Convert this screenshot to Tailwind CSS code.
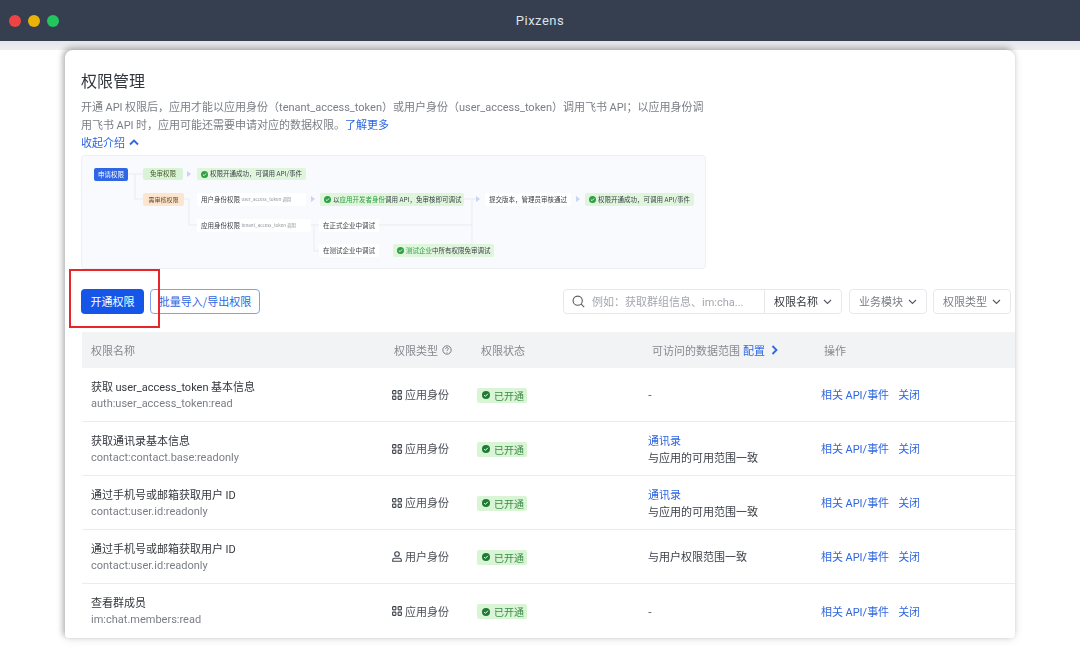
<!DOCTYPE html>
<html lang="zh-CN">
<head>
    <meta charset="UTF-8">
    <title>Pixzens</title>
    <script src="https://cdn.jsdelivr.net/npm/@tailwindcss/browser@4"></script>
</head>
<body class="relative w-[1080px] h-[648px] overflow-hidden bg-white font-['Noto_Sans_CJK_SC','Noto_Sans',sans-serif] text-[#33373d] blur-[0.3px]">
    <!-- title bar -->
    <div class="relative h-[41px] bg-[#353f50] flex items-center justify-center">
        <div class="absolute left-[9px] top-[15px] flex gap-[7px]">
            <span class="w-[12px] h-[12px] rounded-full bg-[#ef4444]"></span>
            <span class="w-[12px] h-[12px] rounded-full bg-[#eab308]"></span>
            <span class="w-[12px] h-[12px] rounded-full bg-[#22c55e]"></span>
        </div>
        <span class="font-['Roboto'] text-[13px] tracking-[0.5px] text-[#dfe2e7]">Pixzens</span>
    </div>
    <div class="h-[9px] bg-gradient-to-b from-[#e4e6ea] to-[#eeeff1]"></div>

    <!-- card -->
    <div class="relative ml-[65px] w-[950px] h-[588px] rounded-t-[8px] rounded-b-[4px] bg-white overflow-hidden shadow-[-2px_-2px_6px_rgba(0,0,0,0.28),0_1px_10px_rgba(0,0,0,0.1)] pt-[19px]">
        <div class="pl-[16px]">
            <h1 class="text-[16px] leading-[22px] text-[#33373d]">权限管理</h1>
            <p class="mt-[6px] w-[640px] text-[11px] leading-[18px] text-[#7a7e85]">开通 <span class="font-['Roboto'] leading-none">API</span> 权限后，应用才能以应用身份（<span class="font-['Roboto'] leading-none">tenant_access_token</span>）或用户身份（<span class="font-['Roboto'] leading-none">user_access_token</span>）调用飞书 <span class="font-['Roboto'] leading-none">API</span>；以应用身份调<br>用飞书 <span class="font-['Roboto'] leading-none">API</span> 时，应用可能还需要申请对应的数据权限。<span class="text-[#2f66e0]">了解更多</span></p>
            <div class="flex items-center gap-[4px] h-[18px] text-[11px] text-[#2f66e0]">收起介绍
                <svg width="10" height="7" viewBox="0 0 10 7" fill="none" stroke="#2f66e0" stroke-width="1.8"><path d="M1 5.500 5 1.500l4 4"/></svg>
            </div>

            <!-- flow diagram -->
            <div class="relative mt-[4px] w-[625px] h-[114px] rounded-[3px] border border-[#eef0f4] bg-[#f8fafe] text-[6.5px] text-[#3a3f47] blur-[0.4px]">
                <!-- connectors -->
                <svg class="absolute -left-px -top-px" width="625" height="114" fill="none" stroke="#e8ebf0" stroke-width="1">
                    <path d="M47 19h15M54 19v25h8M103 44h5v26h8M230 70h8M233 70v26h5M298 70h93M391 44v52h22M383 44h12"/>
                </svg>
                <svg class="absolute -left-px -top-px" width="625" height="114" fill="#c9d3f7">
                    <path d="M106 16l4 3-4 3zM230 41l4 3-4 3zM395 41l4 3-4 3zM495 41l4 3-4 3z"/>
                </svg>

                <span class="absolute left-[12px] top-[12px] w-[34px] h-[13px] rounded-[2px] bg-[#2f66e6] text-white flex items-center justify-center">申请权限</span>
                <span class="absolute left-[61px] top-[12px] w-[40px] h-[12px] rounded-[2px] bg-[#d9f3d6] flex items-center justify-center text-[#4a5a2a]">免审权限</span>
                <span class="absolute left-[115px] top-[12px] w-[109px] h-[12px] rounded-[2px] bg-[#dff5dc] flex items-center gap-[2px] pl-[4px] whitespace-nowrap">
                    <svg width="7" height="7" viewBox="0 0 12 12"><circle cx="6" cy="6" r="6" fill="#2ea043"/><path d="M3.200 6.200 5.200 8l3.600-3.800" fill="none" stroke="#fff" stroke-width="1.500"/></svg>权限开通成功，可调用 API/事件</span>

                <span class="absolute left-[61px] top-[37px] w-[41px] h-[13px] rounded-[2px] bg-[#fde6cf] flex items-center justify-center text-[6px] text-[#6d4a20] whitespace-nowrap">需审核权限</span>
                <span class="absolute left-[115px] top-[37px] w-[109px] h-[13px] rounded-[2px] bg-white flex items-center pl-[4px] whitespace-nowrap">用户身份权限&nbsp;<span class="text-[4.5px] text-[#8f959e]">user_access_token 调用</span></span>
                <span class="absolute left-[238px] top-[37px] w-[144px] h-[13px] rounded-[2px] bg-[#dff5dc] flex items-center gap-[2px] pl-[4px] whitespace-nowrap">
                    <svg width="7" height="7" viewBox="0 0 12 12"><circle cx="6" cy="6" r="6" fill="#2ea043"/><path d="M3.200 6.200 5.200 8l3.600-3.800" fill="none" stroke="#fff" stroke-width="1.500"/></svg><span>以<span class="text-[#2ea043]">应用开发者身份</span>调用 API，免审核即可调试</span></span>
                <span class="absolute left-[403px] top-[37px] w-[86px] h-[13px] rounded-[2px] bg-white flex items-center justify-center whitespace-nowrap">提交版本，管理员审核通过</span>
                <span class="absolute left-[503px] top-[37px] w-[109px] h-[13px] rounded-[2px] bg-[#dff5dc] flex items-center gap-[2px] pl-[4px] whitespace-nowrap">
                    <svg width="7" height="7" viewBox="0 0 12 12"><circle cx="6" cy="6" r="6" fill="#2ea043"/><path d="M3.200 6.200 5.200 8l3.600-3.800" fill="none" stroke="#fff" stroke-width="1.500"/></svg>权限开通成功，可调用 API/事件</span>

                <span class="absolute left-[115px] top-[63px] w-[114px] h-[13px] rounded-[2px] bg-white flex items-center pl-[4px] whitespace-nowrap">应用身份权限&nbsp;<span class="text-[4.5px] text-[#8f959e]">tenant_access_token 调用</span></span>
                <span class="absolute left-[237px] top-[63px] w-[60px] h-[13px] rounded-[2px] bg-white flex items-center justify-center whitespace-nowrap">在正式企业中调试</span>
                <span class="absolute left-[237px] top-[88px] w-[60px] h-[13px] rounded-[2px] bg-white flex items-center justify-center whitespace-nowrap">在测试企业中调试</span>
                <span class="absolute left-[311px] top-[88px] w-[101px] h-[13px] rounded-[2px] bg-[#dff5dc] flex items-center gap-[2px] pl-[4px] whitespace-nowrap">
                    <svg width="7" height="7" viewBox="0 0 12 12"><circle cx="6" cy="6" r="6" fill="#2ea043"/><path d="M3.200 6.200 5.200 8l3.600-3.800" fill="none" stroke="#fff" stroke-width="1.500"/></svg><span><span class="text-[#2ea043]">测试企业</span>中所有权限免审调试</span></span>
            </div>
        </div>

        <!-- toolbar -->
        <div class="flex items-center h-[25px] mt-[20px] pl-[16px] text-[11px]">
            <button class="w-[63px] h-[25px] rounded-[4px] bg-[#1556e8] text-white">开通权限</button>
            <button class="ml-[6px] w-[110px] h-[25px] rounded-[4px] border border-[#7fa3ea] bg-white text-[#2f66e0]">批量导入/导出权限</button>
            <div class="ml-[303px] flex items-center w-[279px] h-[25px] rounded-[4px] border border-[#e6e8eb] text-[#a3a7ae]">
                <svg class="ml-[8px]" width="13" height="13" viewBox="0 0 13 13" fill="none" stroke="#555a62" stroke-width="1.1"><circle cx="5.700" cy="5.700" r="4.600"/><path d="m9.200 9.200 3 3"/></svg>
                <span class="ml-[7px] w-[172px] whitespace-nowrap">例如：获取群组信息、<span class="font-['Roboto'] leading-none">im:cha...</span></span>
                <span class="flex items-center justify-between flex-1 h-full border-l border-[#e6e8eb] pl-[9px] pr-[9px] text-[#33373d]">权限名称
                    <svg width="9" height="6" viewBox="0 0 9 6" fill="none" stroke="#555a62" stroke-width="1.1"><path d="m1 1 3.500 3.500L8 1"/></svg></span>
            </div>
            <div class="ml-[7px] flex items-center justify-between px-[9px] w-[78px] h-[25px] rounded-[4px] border border-[#e6e8eb] text-[#7a7e85]">业务模块
                <svg width="9" height="6" viewBox="0 0 9 6" fill="none" stroke="#555a62" stroke-width="1.1"><path d="m1 1 3.500 3.500L8 1"/></svg></div>
            <div class="ml-[6px] flex items-center justify-between px-[9px] w-[78px] h-[25px] rounded-[4px] border border-[#e6e8eb] text-[#7a7e85]">权限类型
                <svg width="9" height="6" viewBox="0 0 9 6" fill="none" stroke="#555a62" stroke-width="1.1"><path d="m1 1 3.500 3.500L8 1"/></svg></div>
        </div>

        <!-- table -->
        <div class="mt-[18px] ml-[17px] text-[11px]">
            <div class="grid grid-cols-[310px_86px_170px_173px_1fr] items-center h-[36px] bg-[#f2f3f5] text-[#85898f]">
                <div class="pl-[9px]">权限名称</div>
                <div class="pl-[2px] flex items-center gap-[4px]">权限类型
                    <svg width="10" height="10" viewBox="0 0 11 11" fill="none" stroke="#6b7078"><circle cx="5.500" cy="5.500" r="4.600"/><path d="M4 4.400c0-2 3-2 3-.2 0 1-1.500 1-1.500 2.200M5.500 7.600v.8"/></svg></div>
                <div class="pl-[3px]">权限状态</div>
                <div class="pl-[4px] flex items-center gap-[3px]">可访问的数据范围 <span class="text-[#2f66e0]">配置</span>
                    <svg class="ml-[3px]" width="7" height="10" viewBox="0 0 7 10" fill="none" stroke="#2f66e0" stroke-width="1.800"><path d="m1.500 1 4 4-4 4"/></svg></div>
                <div class="pl-[3px]">操作</div>
            </div>

            <!-- row 1 -->
            <div class="grid grid-cols-[310px_86px_170px_173px_1fr] items-center h-[54px] border-b border-[#ebecee]">
                <div class="pl-[9px] leading-[17px]"><div>获取 <span class="font-['Roboto'] leading-none">user_access_token</span> 基本信息</div><div class="font-['Roboto'] text-[#7a7e85]">auth:user_access_token:read</div></div>
                <div class="flex items-center gap-[3px] text-[#4a4f57]">
                    <svg width="10" height="10" viewBox="0 0 10 10" fill="none" stroke="#3f444b" stroke-width="1.100"><rect x="0.600" y="0.600" width="3.300" height="3.300" rx="0.600"/><rect x="6.100" y="0.600" width="3.300" height="3.300" rx="0.600"/><rect x="0.600" y="6.100" width="3.300" height="3.300" rx="0.600"/><rect x="6.100" y="6.100" width="3.300" height="3.300" rx="0.600"/></svg>应用身份</div>
                <div><span class="-ml-px inline-flex items-center gap-[4px] w-[50px] h-[15px] pl-[5px] rounded-[2px] bg-[#d9f5d6] text-[#3b8a46] text-[10px]">
                    <svg width="8" height="8" viewBox="0 0 12 12"><circle cx="6" cy="6" r="6" fill="#1f7a33"/><path d="M3.200 6.200 5.200 8l3.600-3.800" fill="none" stroke="#fff" stroke-width="1.500"/></svg>已开通</span></div>
                <div class="text-[#3a3f47]">-</div>
                <div class="text-[#2f66e0] flex gap-[9px]"><span>相关 <span class="font-['Roboto'] leading-none">API/</span>事件</span><span>关闭</span></div>
            </div>
            <!-- row 2 -->
            <div class="grid grid-cols-[310px_86px_170px_173px_1fr] items-center h-[54px] border-b border-[#ebecee]">
                <div class="pl-[9px] leading-[17px]"><div>获取通讯录基本信息</div><div class="font-['Roboto'] text-[#7a7e85]">contact:contact.base:readonly</div></div>
                <div class="flex items-center gap-[3px] text-[#4a4f57]">
                    <svg width="10" height="10" viewBox="0 0 10 10" fill="none" stroke="#3f444b" stroke-width="1.100"><rect x="0.600" y="0.600" width="3.300" height="3.300" rx="0.600"/><rect x="6.100" y="0.600" width="3.300" height="3.300" rx="0.600"/><rect x="0.600" y="6.100" width="3.300" height="3.300" rx="0.600"/><rect x="6.100" y="6.100" width="3.300" height="3.300" rx="0.600"/></svg>应用身份</div>
                <div><span class="-ml-px inline-flex items-center gap-[4px] w-[50px] h-[15px] pl-[5px] rounded-[2px] bg-[#d9f5d6] text-[#3b8a46] text-[10px]">
                    <svg width="8" height="8" viewBox="0 0 12 12"><circle cx="6" cy="6" r="6" fill="#1f7a33"/><path d="M3.200 6.200 5.200 8l3.600-3.800" fill="none" stroke="#fff" stroke-width="1.500"/></svg>已开通</span></div>
                <div class="leading-[17px]"><div class="text-[#2f66e0]">通讯录</div><div class="text-[#3a3f47]">与应用的可用范围一致</div></div>
                <div class="text-[#2f66e0] flex gap-[9px]"><span>相关 <span class="font-['Roboto'] leading-none">API/</span>事件</span><span>关闭</span></div>
            </div>
            <!-- row 3 -->
            <div class="grid grid-cols-[310px_86px_170px_173px_1fr] items-center h-[54px] border-b border-[#ebecee]">
                <div class="pl-[9px] leading-[17px]"><div>通过手机号或邮箱获取用户 <span class="font-['Roboto'] leading-none">ID</span></div><div class="font-['Roboto'] text-[#7a7e85]">contact:user.id:readonly</div></div>
                <div class="flex items-center gap-[3px] text-[#4a4f57]">
                    <svg width="10" height="10" viewBox="0 0 10 10" fill="none" stroke="#3f444b" stroke-width="1.100"><rect x="0.600" y="0.600" width="3.300" height="3.300" rx="0.600"/><rect x="6.100" y="0.600" width="3.300" height="3.300" rx="0.600"/><rect x="0.600" y="6.100" width="3.300" height="3.300" rx="0.600"/><rect x="6.100" y="6.100" width="3.300" height="3.300" rx="0.600"/></svg>应用身份</div>
                <div><span class="-ml-px inline-flex items-center gap-[4px] w-[50px] h-[15px] pl-[5px] rounded-[2px] bg-[#d9f5d6] text-[#3b8a46] text-[10px]">
                    <svg width="8" height="8" viewBox="0 0 12 12"><circle cx="6" cy="6" r="6" fill="#1f7a33"/><path d="M3.200 6.200 5.200 8l3.600-3.800" fill="none" stroke="#fff" stroke-width="1.500"/></svg>已开通</span></div>
                <div class="leading-[17px]"><div class="text-[#2f66e0]">通讯录</div><div class="text-[#3a3f47]">与应用的可用范围一致</div></div>
                <div class="text-[#2f66e0] flex gap-[9px]"><span>相关 <span class="font-['Roboto'] leading-none">API/</span>事件</span><span>关闭</span></div>
            </div>
            <!-- row 4 -->
            <div class="grid grid-cols-[310px_86px_170px_173px_1fr] items-center h-[54px] border-b border-[#ebecee]">
                <div class="pl-[9px] leading-[17px]"><div>通过手机号或邮箱获取用户 <span class="font-['Roboto'] leading-none">ID</span></div><div class="font-['Roboto'] text-[#7a7e85]">contact:user.id:readonly</div></div>
                <div class="flex items-center gap-[3px] text-[#4a4f57]">
                    <svg width="10" height="11" viewBox="0 0 10 11" fill="none" stroke="#3f444b" stroke-width="1.100"><circle cx="5" cy="3" r="2.300"/><path d="M0.700 10.300V9c0-1 .8-1.800 1.800-1.800h5c1 0 1.800.8 1.800 1.800v1.300z"/></svg>用户身份</div>
                <div><span class="-ml-px inline-flex items-center gap-[4px] w-[50px] h-[15px] pl-[5px] rounded-[2px] bg-[#d9f5d6] text-[#3b8a46] text-[10px]">
                    <svg width="8" height="8" viewBox="0 0 12 12"><circle cx="6" cy="6" r="6" fill="#1f7a33"/><path d="M3.200 6.200 5.200 8l3.600-3.800" fill="none" stroke="#fff" stroke-width="1.500"/></svg>已开通</span></div>
                <div class="text-[#3a3f47]">与用户权限范围一致</div>
                <div class="text-[#2f66e0] flex gap-[9px]"><span>相关 <span class="font-['Roboto'] leading-none">API/</span>事件</span><span>关闭</span></div>
            </div>
            <!-- row 5 -->
            <div class="grid grid-cols-[310px_86px_170px_173px_1fr] items-center h-[54px]">
                <div class="pl-[9px] leading-[17px]"><div>查看群成员</div><div class="font-['Roboto'] text-[#7a7e85]">im:chat.members:read</div></div>
                <div class="flex items-center gap-[3px] text-[#4a4f57]">
                    <svg width="10" height="10" viewBox="0 0 10 10" fill="none" stroke="#3f444b" stroke-width="1.100"><rect x="0.600" y="0.600" width="3.300" height="3.300" rx="0.600"/><rect x="6.100" y="0.600" width="3.300" height="3.300" rx="0.600"/><rect x="0.600" y="6.100" width="3.300" height="3.300" rx="0.600"/><rect x="6.100" y="6.100" width="3.300" height="3.300" rx="0.600"/></svg>应用身份</div>
                <div><span class="-ml-px inline-flex items-center gap-[4px] w-[50px] h-[15px] pl-[5px] rounded-[2px] bg-[#d9f5d6] text-[#3b8a46] text-[10px]">
                    <svg width="8" height="8" viewBox="0 0 12 12"><circle cx="6" cy="6" r="6" fill="#1f7a33"/><path d="M3.200 6.200 5.200 8l3.600-3.800" fill="none" stroke="#fff" stroke-width="1.500"/></svg>已开通</span></div>
                <div class="text-[#3a3f47]">-</div>
                <div class="text-[#2f66e0] flex gap-[9px]"><span>相关 <span class="font-['Roboto'] leading-none">API/</span>事件</span><span>关闭</span></div>
            </div>
        </div>
    </div>

    <!-- red annotation box -->
    <div class="absolute left-[69px] top-[269px] w-[91px] h-[59px] border-2 border-[#e8262a]"></div>
</body>
</html>
